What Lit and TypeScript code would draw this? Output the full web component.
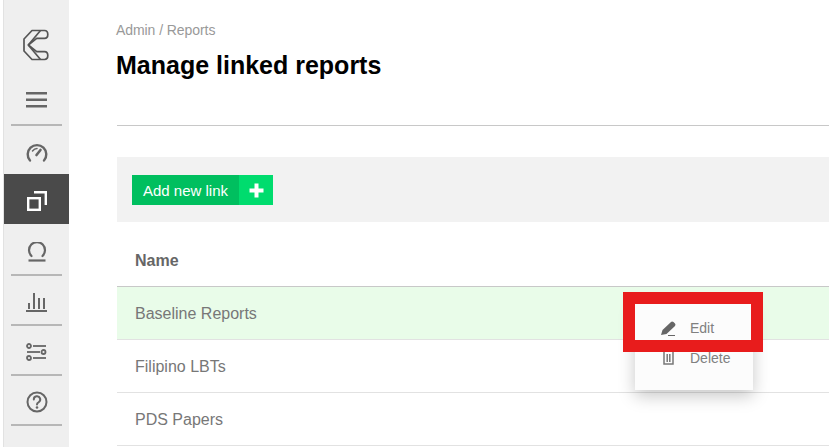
import { LitElement, html, css } from "lit";
import { customElement } from "lit/decorators.js";

const rows = ["Baseline Reports", "Filipino LBTs", "PDS Papers"];

@customElement("app-root")
export class AppRoot extends LitElement {
  static styles = css`
    * {
      box-sizing: border-box;
    }

    :host {
      display: flex;
      width: 829px;
      height: 447px;
      overflow: hidden;
      background: #fff;
      font-family: "Liberation Sans", Arial, sans-serif;
    }

    .side {
      flex: none;
      width: 69px;
      height: 447px;
      padding-left: 4px;
      background: linear-gradient(to right, #fff 0, #fff 3px, #e2e2e2 3px, #e2e2e2 4px, #efefef 4px);
      display: flex;
      flex-direction: column;
    }

    .logo {
      height: 74px;
      display: flex;
      justify-content: center;
      padding-top: 29px;
      padding-right: 1px;
    }

    .item {
      height: 50px;
      display: flex;
      align-items: center;
      justify-content: center;
      position: relative;
    }

    .item.line::after {
      content: "";
      position: absolute;
      left: 7px;
      right: 7px;
      bottom: -2px;
      height: 2px;
      background: #b7b7b7;
    }

    .item.active {
      background: #4a4a4a;
      padding-top: 3px;
    }

    .hamb {
      padding-top: 2px;
    }

    .gauge {
      padding-top: 8px;
    }

    .omega {
      padding-top: 5px;
    }

    .chart,
    .sliders,
    .help {
      padding-top: 6px;
    }

    svg {
      display: block;
    }

    .main {
      flex: 1;
      min-width: 0;
      padding-left: 48px;
      position: relative;
    }

    .crumb {
      height: 14px;
      margin-top: 23px;
      margin-left: -1px;
      font-size: 14px;
      line-height: 14px;
      color: #999;
      letter-spacing: -0.07px;
    }

    h1 {
      margin: 13px 0 0 -1px;
      font-size: 25px;
      line-height: 30px;
      font-weight: 700;
      color: #000;
    }

    hr {
      margin: 45px 0 0;
      border: 0;
      border-top: 1px solid #c8c8c8;
    }

    .toolbar {
      margin-top: 31px;
      height: 65px;
      background: #f2f2f2;
      padding: 18px 15px;
    }

    .btn {
      display: flex;
      width: 141px;
      height: 30px;
      color: #fff;
      font-size: 15px;
    }

    .btn .label {
      width: 107px;
      background: #00bf5f;
      display: flex;
      align-items: center;
      justify-content: center;
    }

    .btn .plus {
      flex: 1;
      background: #00dc6e;
      display: flex;
      align-items: center;
      justify-content: center;
    }

    .head {
      height: 65px;
      padding: 14px 18px 0;
      display: flex;
      align-items: center;
      font-size: 16px;
      font-weight: 700;
      color: #666;
      border-bottom: 1px solid #c8c8c8;
    }

    .row {
      height: 53px;
      padding: 2px 18px 0;
      display: flex;
      align-items: center;
      font-size: 16px;
      color: #777;
      border-bottom: 1px solid #e2e2e2;
    }

    .row.on {
      background: #e9fce9;
    }

    .menu {
      position: absolute;
      left: 566px;
      top: 304px;
      width: 118px;
      height: 86px;
      padding-top: 9px;
      background: #fcfcfc;
      box-shadow: 0 6px 16px rgba(0, 0, 0, 0.22);
      font-size: 14px;
      color: #808080;
    }

    .menu div {
      height: 30px;
      display: flex;
      align-items: center;
    }

    .menu .ic {
      width: 55px;
      display: flex;
      justify-content: flex-end;
      padding-right: 14px;
    }

    .mark {
      position: absolute;
      left: 554px;
      top: 292px;
      width: 140px;
      height: 60px;
      border: 12px solid #e81c1c;
    }
  `;

  render() {
    return html`
      <nav class="side">
        <div class="logo">
          <svg width="26" height="33" viewBox="0 0 26 33" fill="none" stroke="#555" stroke-width="1.700" stroke-linejoin="round">
            <path d="M9 1.500 H21.500 Q24.800 1.500 24.800 5.400 Q24.800 9.300 21.500 9.300 H13.700 L5.300 16 L13.700 22.700 H21.500 Q24.800 22.700 24.800 26.600 Q24.800 30.500 21.500 30.500 H9 L1 22 V10 Z" />
            <path d="M5.300 16 L17.500 1.500 M5.300 16 L17.500 30.500" />
          </svg>
        </div>
        <div class="item line hamb">
          <svg width="22" height="18" viewBox="0 0 22 18" fill="#666">
            <rect y="1" width="21" height="2.500" /><rect y="7.500" width="21" height="2.500" /><rect y="14" width="21" height="2.500" />
          </svg>
        </div>
        <div class="item gauge">
          <svg width="22" height="22" viewBox="0 0 22 22" fill="none" stroke="#666" stroke-width="2.400" stroke-linecap="round">
            <path d="M4 18.500 A9.300 9.300 0 1 1 18 18.500" />
            <path d="M10.500 13 L14.500 8" stroke-width="2.600" />
            <path d="M6.500 9 Q8.500 6.500 11 6.500" stroke-width="1.500" />
          </svg>
        </div>
        <div class="item active">
          <svg width="20" height="20" viewBox="0 0 20 20" fill="none" stroke="#fff" stroke-width="2.400">
            <rect x="1.200" y="7.200" width="11.600" height="11.600" />
            <path d="M7 1.200 H18.800 V14" />
          </svg>
        </div>
        <div class="item line omega">
          <svg width="20" height="20" viewBox="0 0 20 20" fill="none" stroke="#666" stroke-width="2.200">
            <path d="M4.500 14 A8 8 0 1 1 15.500 14" stroke-linecap="round" />
            <path d="M1.500 18.500 H18.500" />
          </svg>
        </div>
        <div class="item line chart">
          <svg width="22" height="20" viewBox="0 0 22 20" fill="#666">
            <rect x="2" y="11" width="2" height="6" /><rect x="7" y="1" width="2" height="16" />
            <rect x="12" y="6" width="2" height="11" /><rect x="17" y="6" width="2" height="11" />
            <rect y="18" width="21" height="2" />
          </svg>
        </div>
        <div class="item line sliders">
          <svg width="21" height="18" viewBox="0 0 21 18" fill="none" stroke="#666" stroke-width="1.800">
            <circle cx="3" cy="3" r="2" /><path d="M7 3 H20" />
            <path d="M1 9 H14" /><circle cx="17.500" cy="9" r="2" />
            <circle cx="3" cy="15" r="2" /><path d="M7 15 H20" />
          </svg>
        </div>
        <div class="item line help">
          <svg width="22" height="22" viewBox="0 0 22 22" fill="none" stroke="#666" stroke-width="2">
            <circle cx="11" cy="11" r="9.500" />
            <path d="M7.800 8.500 A3.200 3.200 0 1 1 12.500 11.300 Q11 12 11 13.500" stroke-linecap="round" />
            <circle cx="11" cy="16.500" r="1.300" fill="#666" stroke="none" />
          </svg>
        </div>
      </nav>

      <main class="main">
        <div class="crumb">Admin / Reports</div>
        <h1>Manage linked reports</h1>
        <hr />
        <div class="toolbar">
          <div class="btn">
            <span class="label">Add new link</span>
            <span class="plus">
              <svg width="15" height="15" viewBox="0 0 15 15" fill="#fff">
                <path d="M5.500 0.500 H9.500 V5.500 H14.500 V9.500 H9.500 V14.500 H5.500 V9.500 H0.500 V5.500 H5.500 Z" />
              </svg>
            </span>
          </div>
        </div>
        <div class="head">Name</div>
        ${rows.map((r, i) => html`<div class="row ${i === 0 ? "on" : ""}">${r}</div>`)}

        <div class="menu">
          <div>
            <span class="ic">
              <svg width="15" height="15" viewBox="0 0 15 15" fill="#666">
                <path d="M0 14 L1.500 9 L10 1 Q11 0 12.500 1 L14 2.500 Q15 3.500 14 5 L5.500 13 Z" />
                <rect x="7" y="14" width="7" height="1" />
              </svg>
            </span>
            Edit
          </div>
          <div>
            <span class="ic">
              <svg width="15" height="14" viewBox="0 0 15 14" fill="none" stroke="#777" stroke-width="1.500">
                <path d="M3 1 V13 H12 V1" />
                <path d="M6.200 3 V11 M8.800 3 V11" />
              </svg>
            </span>
            Delete
          </div>
        </div>
        <div class="mark"></div>
      </main>
    `;
  }
}
